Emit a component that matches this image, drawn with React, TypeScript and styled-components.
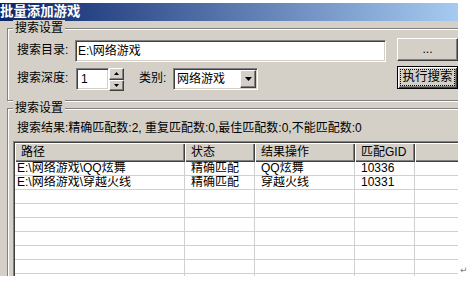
import React from "react";
import styled, { createGlobalStyle, css } from "styled-components";

const GlobalStyle = createGlobalStyle`
  html, body { margin: 0; padding: 0; background: #ffffff; }
  body {
    font-family: "Liberation Sans", "Noto Sans CJK SC", sans-serif;
    font-size: 12px;
    color: #000000;
  }
  * { box-sizing: border-box; }
`;

const raised = css`
  border: 1px solid;
  border-color: #ffffff #404040 #404040 #ffffff;
  box-shadow: inset -1px -1px 0 #808080, inset 1px 1px 0 #d4d0c8;
  background: #d4d0c8;
`;

const sunken = css`
  border: 1px solid;
  border-color: #808080 #ffffff #ffffff #808080;
  box-shadow: inset 1px 1px 0 #404040, inset -1px -1px 0 #d4d0c8;
  background: #ffffff;
`;

const Page = styled.div`
  display: flex;
  align-items: flex-end;
  margin-top: 3px;
  height: 273px;
`;

const Window = styled.div`
  flex: 0 0 458px;
  height: 273px;
  background: #d4d0c8;
  overflow: hidden;
  display: flex;
  flex-direction: column;
`;

const TitleBar = styled.div`
  flex: 0 0 18px;
  background: linear-gradient(to right, #0a246a 0%, #a6caf0 100%);
  color: #ffffff;
  font-weight: bold;
  font-size: 13.4px;
  line-height: 18px;
  white-space: nowrap;
`;

const Content = styled.div`
  display: flex;
  flex-direction: column;
  padding-left: 7px;
`;

const Group = styled.div<{ $top: number; $pad: string }>`
  position: relative;
  flex-shrink: 0;
  width: 470px;
  margin-top: ${(p) => p.$top}px;
  padding: ${(p) => p.$pad};
  border: 1px solid #808080;
  box-shadow: inset 1px 1px 0 #ffffff, 1px 1px 0 #ffffff;
`;

const Legend = styled.span`
  position: absolute;
  top: -9px;
  left: 5px;
  padding: 0 2px;
  background: #d4d0c8;
  line-height: 16px;
  white-space: nowrap;
`;

const FormGrid = styled.div`
  display: grid;
  grid-template-columns: 58px 322px 61px;
  grid-template-rows: 24px 25px;
  row-gap: 4px;
  align-items: start;
`;

const FieldLabel = styled.span<{ $h: number; $w?: number; $ml?: number }>`
  line-height: ${(p) => p.$h}px;
  white-space: nowrap;
  ${(p) => (p.$w ? `flex: 0 0 ${p.$w}px;` : "")}
  margin-left: ${(p) => p.$ml ?? 0}px;
`;

const TextBox = styled.div<{ $w: number; $mt: number; $pl: number }>`
  ${sunken};
  width: ${(p) => p.$w}px;
  height: 22px;
  margin-top: ${(p) => p.$mt}px;
  padding-left: ${(p) => p.$pl}px;
  line-height: 20px;
  white-space: nowrap;
  overflow: hidden;
`;

const InlineRow = styled.div`
  display: flex;
  align-items: flex-start;
`;

const Spinner = styled.div`
  display: flex;
  margin: 2px 0 0 1px;
`;

const SpinButtons = styled.div`
  display: flex;
  flex-direction: column;
  width: 15px;
  height: 23px;
`;

const SpinButton = styled.div`
  ${raised};
  flex: 1;
  display: flex;
  align-items: center;
  justify-content: center;
`;

const Combo = styled.div`
  ${sunken};
  display: flex;
  width: 85px;
  height: 22px;
  margin-top: 2px;
  padding: 1px;
`;

const ComboText = styled.span`
  flex: 1;
  padding-left: 2px;
  line-height: 18px;
  white-space: nowrap;
`;

const DropButton = styled.div`
  ${raised};
  flex: 0 0 16px;
  height: 18px;
  display: flex;
  align-items: center;
  justify-content: center;
`;

const PushButton = styled.div`
  ${raised};
  width: 61px;
  height: 23px;
  display: flex;
  align-items: center;
  justify-content: center;
  line-height: 21px;
`;

const DefaultButton = styled.div`
  width: 61px;
  height: 23px;
  border: 1px solid #000000;
  box-shadow: inset 1px 1px 0 #ffffff, inset -1px -1px 0 #404040,
    inset 2px 2px 0 #d4d0c8, inset -2px -2px 0 #808080;
  background: #d4d0c8;
  padding: 2px;
  display: flex;
`;

const FocusRing = styled.span`
  flex: 1;
  border: 1px dotted #000000;
  display: flex;
  align-items: center;
  justify-content: center;
  font-size: 12.5px;
  line-height: 15px;
  white-space: nowrap;
`;

const ResultText = styled.div`
  margin-left: 4px;
  line-height: 16px;
  white-space: nowrap;
`;

const ListView = styled.div`
  ${sunken};
  margin-top: 5px;
  width: 470px;
  padding: 1px;
`;

const HeaderRow = styled.div`
  display: flex;
  height: 19px;
`;

const HeaderCell = styled.div<{ $w?: number }>`
  ${(p) => (p.$w ? `flex: 0 0 ${p.$w}px;` : "flex: 1;")}
  background: #d4d0c8;
  box-shadow: inset 1px 1px 0 #ffffff, inset -1px -1px 0 #404040,
    inset -2px -2px 0 #808080;
  padding-left: 6px;
  line-height: 19px;
  white-space: nowrap;
  overflow: hidden;
`;

const Row = styled.div`
  display: flex;
  height: 14px;
  border-bottom: 1px solid #d0d0d0;
`;

const Cell = styled.div<{ $w?: number; $pad: number }>`
  ${(p) => (p.$w ? `flex: 0 0 ${p.$w}px;` : "flex: 1;")}
  border-right: 1px solid #d0d0d0;
  padding-left: ${(p) => p.$pad}px;
  line-height: 13px;
  white-space: nowrap;
  overflow: hidden;
`;

const ReturnMark = styled.span`
  font-family: "DejaVu Sans", sans-serif;
  font-size: 9px;
  line-height: 10px;
  color: #808080;
  margin: 0 0 1px 2px;
`;

const ArrowUp = () => (
  <svg width="5" height="3" viewBox="0 0 5 3">
    <polygon points="2.5,0 5,3 0,3" fill="#000" />
  </svg>
);

const ArrowDown = ({ w = 5, h = 3 }: { w?: number; h?: number }) => (
  <svg width={w} height={h} viewBox={`0 0 ${w} ${h}`}>
    <polygon points={`0,0 ${w},0 ${w / 2},${h}`} fill="#000" />
  </svg>
);

const columns = [
  { title: "路径", w: 170, pad: 2 },
  { title: "状态", w: 70, pad: 6 },
  { title: "结果操作", w: 100, pad: 6 },
  { title: "匹配GID", w: 60, pad: 6 },
  { title: "", w: undefined, pad: 6 },
];

const rows: string[][] = [
  ["E:\\网络游戏\\QQ炫舞", "精确匹配", "QQ炫舞", "10336", ""],
  ["E:\\网络游戏\\穿越火线", "精确匹配", "穿越火线", "10331", ""],
];

const EMPTY_ROWS = 7;

export default function App() {
  const allRows = [
    ...rows,
    ...Array.from({ length: EMPTY_ROWS }, () => ["", "", "", "", ""]),
  ];
  return (
    <>
      <GlobalStyle />
      <Page>
        <Window>
          <TitleBar>批量添加游戏</TitleBar>
          <Content>
            <Group $top={7} $pad="9px 0 9px 9px">
              <Legend>搜索设置</Legend>
              <FormGrid>
                <FieldLabel $h={24}>搜索目录:</FieldLabel>
                <TextBox $w={311} $mt={2} $pl={2}>
                  E:\网络游戏
                </TextBox>
                <PushButton>...</PushButton>

                <FieldLabel $h={25}>搜索深度:</FieldLabel>
                <InlineRow>
                  <Spinner>
                    <TextBox $w={33} $mt={0} $pl={4}>
                      1
                    </TextBox>
                    <SpinButtons>
                      <SpinButton>
                        <ArrowUp />
                      </SpinButton>
                      <SpinButton>
                        <ArrowDown />
                      </SpinButton>
                    </SpinButtons>
                  </Spinner>
                  <FieldLabel $h={25} $w={34} $ml={15}>
                    类别:
                  </FieldLabel>
                  <Combo>
                    <ComboText>网络游戏</ComboText>
                    <DropButton>
                      <ArrowDown w={7} h={4} />
                    </DropButton>
                  </Combo>
                </InlineRow>
                <DefaultButton>
                  <FocusRing>执行搜索</FocusRing>
                </DefaultButton>
              </FormGrid>
            </Group>

            <Group $top={7} $pad="11px 0 0 5px">
              <Legend>搜索设置</Legend>
              <ResultText>
                搜索结果:精确匹配数:2, 重复匹配数:0,最佳匹配数:0,不能匹配数:0
              </ResultText>
              <ListView>
                <HeaderRow>
                  {columns.map((c, i) => (
                    <HeaderCell key={i} $w={c.w}>
                      {c.title}
                    </HeaderCell>
                  ))}
                </HeaderRow>
                {allRows.map((r, ri) => (
                  <Row key={ri}>
                    {columns.map((c, ci) => (
                      <Cell key={ci} $w={c.w} $pad={c.pad}>
                        {r[ci]}
                      </Cell>
                    ))}
                  </Row>
                ))}
              </ListView>
            </Group>
          </Content>
        </Window>
        <ReturnMark>↵</ReturnMark>
      </Page>
    </>
  );
}
